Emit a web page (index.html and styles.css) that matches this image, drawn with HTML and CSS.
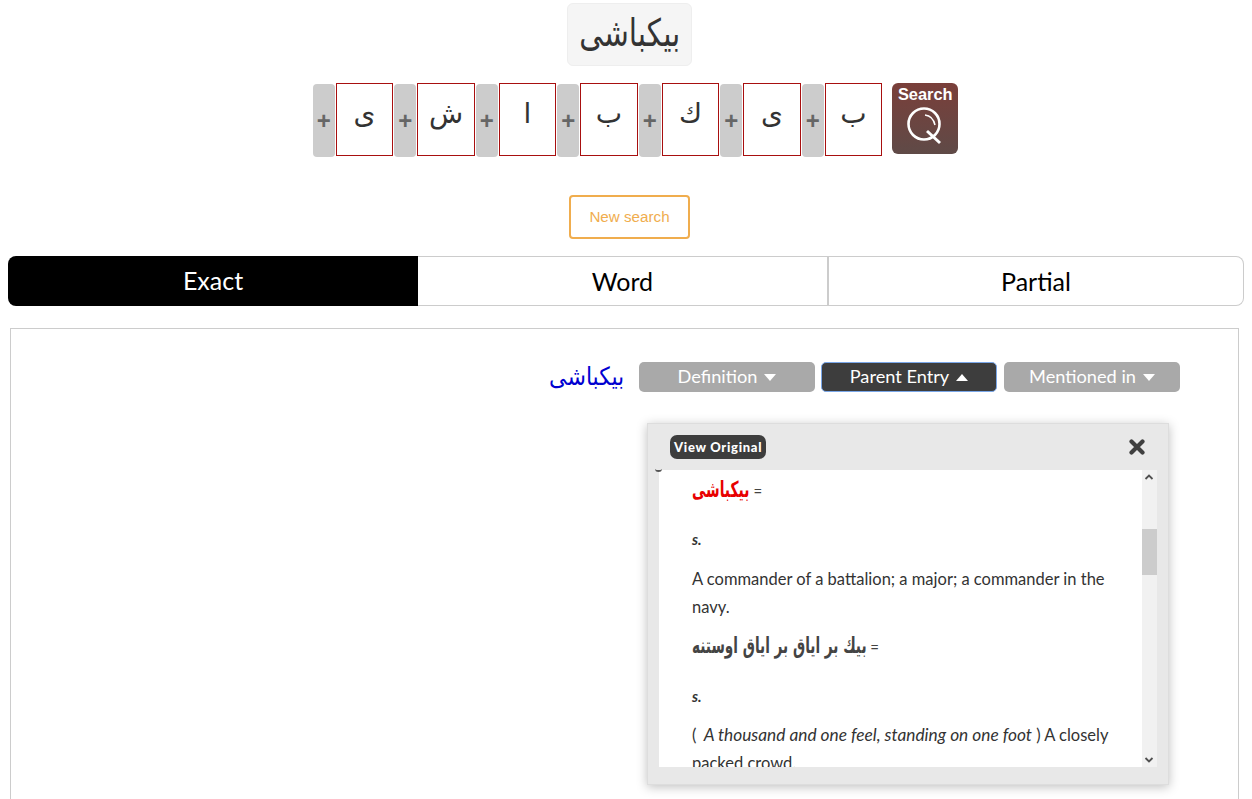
FILE: index.html
```html
<!DOCTYPE html>
<html lang="en">
<head>
<meta charset="utf-8">
<title>Search</title>
<link rel="stylesheet" href="styles.css">
</head>
<body>
<div class="head">
  <div class="word"><span class="word-text">بيكباشى</span></div>
</div>
<div class="letters" dir="rtl">
  <div class="search">
    <span class="search-label">Search</span>
    <svg class="search-icon" viewBox="0 0 40 40" width="40" height="40"><circle cx="19" cy="18" r="15.5" fill="none" stroke="#fff" stroke-width="2.6"/><path d="M22 25 L35 37" stroke="#fff" stroke-width="3" fill="none"/><path d="M20 9 Q28 10 30 19" stroke="#fff" stroke-width="1.5" fill="none"/></svg>
  </div>
  <div class="cell">ب</div><div class="plus">+</div>
  <div class="cell">ى</div><div class="plus">+</div>
  <div class="cell">ك</div><div class="plus">+</div>
  <div class="cell">ب</div><div class="plus">+</div>
  <div class="cell">ا</div><div class="plus">+</div>
  <div class="cell">ش</div><div class="plus">+</div>
  <div class="cell">ى</div><div class="plus">+</div>
</div>
<div class="new-row"><button class="new">New search</button></div>
<div class="tabs">
  <div class="tab tab-active">Exact</div>
  <div class="tab tab-mid">Word</div>
  <div class="tab tab-last">Partial</div>
</div>
<div class="panel">
  <div class="entry">
    <span class="entry-word">بيكباشى</span>
    <button class="pill pill-first">Definition <i class="down"></i></button>
    <button class="pill pill-on">Parent Entry <i class="up"></i></button>
    <button class="pill">Mentioned in <i class="down"></i></button>
  </div>
  <div class="popup">
    <div class="popup-head">
      <span class="view">View Original</span>
      <svg class="close" viewBox="0 0 16 16" width="16" height="16"><path d="M2.5 2.5 L13.5 13.5 M13.5 2.5 L2.5 13.5" stroke="#3f3f3f" stroke-width="4.2" stroke-linecap="round"/></svg>
    </div>
    <div class="curl"></div>
    <div class="content">
      <div class="text">
        <p class="ar"><b class="ar-word ar-red">بيكباشى</b> =</p>
        <p class="pos">s.</p>
        <p class="def def-first">A commander of a battalion; a major; a commander in the navy.</p>
        <p class="ar ar2"><b class="ar-word ar-long">بيك بر اياق بر اياق اوستنه</b> =</p>
        <p class="pos pos2">s.</p>
        <p class="def">( <em>A thousand and one feel, standing on one foot</em> ) A closely packed crowd.</p>
      </div>
      <div class="track">
        <svg class="arrow arrow-up" viewBox="0 0 10 6" width="10" height="6"><path d="M1.5 5 L5 1.5 L8.5 5" fill="none" stroke="#505050" stroke-width="1.8"/></svg>
        <div class="thumb"></div>
        <svg class="arrow arrow-down" viewBox="0 0 10 6" width="10" height="6"><path d="M1.5 1 L5 4.5 L8.5 1" fill="none" stroke="#505050" stroke-width="1.8"/></svg>
      </div>
    </div>
  </div>
</div>
</body>
</html>
```

FILE: styles.css
```css
html, body { margin: 0; padding: 0; }
body {
  height: 799px;
  overflow: hidden;
  background: #fff;
  color: #333;
  font-family: "Lato", "DejaVu Sans", sans-serif;
}
button { font-family: inherit; cursor: pointer; }
.head {
  display: flex;
  justify-content: center;
  padding: 3px 0 0 7px;
}
.word {
  width: 123px;
  height: 61px;
  border: 1px solid #eee;
  border-radius: 6px;
  background: #f5f5f5;
  color: #333;
  display: flex;
  justify-content: center;
  white-space: nowrap;
  overflow: hidden;
}
.word-text {
  display: block;
  flex: none;
  font: 38px/58px "DejaVu Sans", sans-serif;
  transform: scaleX(.78);
}
.letters {
  display: flex;
  justify-content: center;
  align-items: flex-start;
  margin-top: 17px;
  padding-left: 18px;
  height: 74px;
}
.search {
  width: 66px;
  height: 71px;
  margin-left: 10px;
  border-radius: 6px;
  background: linear-gradient(#7a3f3a, #5f4a47);
  color: #fff;
  display: flex;
  flex-direction: column;
  align-items: center;
}
.search-label {
  font: bold 16.4px/22px "Liberation Sans", sans-serif;
  margin-bottom: 1px;
}
.cell {
  box-sizing: border-box;
  width: 57.5px;
  height: 73px;
  border: 1px solid #a80f0f;
  background: #fff;
  margin-left: 1px;
  text-align: center;
  font: 28px/60px "DejaVu Sans", sans-serif;
  color: #333;
}
.plus {
  box-sizing: border-box;
  width: 22px;
  height: 73px;
  margin-top: 1px;
  margin-left: 1px;
  border-radius: 4px;
  background: #ccc;
  color: #666;
  text-align: center;
  font: bold 24px/74px "Liberation Sans", sans-serif;
}
.new-row {
  display: flex;
  justify-content: center;
  padding-left: 7px;
  margin-top: 38px;
}
.new {
  width: 121px;
  height: 44px;
  border: 2px solid #f0ad4e;
  border-radius: 4px;
  background: #fff;
  color: #f0ad4e;
  font: 15.2px "Liberation Sans", sans-serif;
  padding: 0 0 2px;
}
.tabs {
  display: flex;
  margin: 17px 8px 0;
  height: 50px;
  font-size: 25px;
  font-family: "Lato", sans-serif;
}
.tab {
  box-sizing: border-box;
  line-height: 48px;
  text-align: center;
  color: #000;
  border: 1px solid #ccc;
  border-left: 0;
}
.tab-active {
  width: 410px;
  background: #000;
  color: #fff;
  border: 0;
  border-radius: 8px 0 0 8px;
}
.tab-mid { width: 411px; border-right: 2px solid #ccc; }
.tab-last { width: 415px; border-radius: 0 8px 8px 0; }
.panel {
  box-sizing: border-box;
  margin: 22px 13px 0 10px;
  height: 480px;
  border: 1px solid #ccc;
  border-bottom: 0;
  position: relative;
}
.entry {
  display: flex;
  align-items: center;
  justify-content: flex-end;
  gap: 7px;
  margin-top: 33px;
  padding-right: 58px;
  height: 30px;
}
.entry-word {
  color: #0000d0;
  font: 25px/30px "DejaVu Sans", sans-serif;
  margin-right: 3px;
  transform: scaleX(.88);
}
.pill {
  box-sizing: border-box;
  width: 176px;
  height: 30px;
  border: 0;
  border-radius: 5px;
  background: #a9a9a9;
  color: #fff;
  font-size: 18.2px;
  padding: 0 0 2px;
  display: flex;
  align-items: center;
  justify-content: center;
  gap: 7px;
}
.pill-first { margin-right: -1px; }
.pill-on {
  background: #3d3d3d;
  border: 1px solid #7aa7e8;
}
.down, .up {
  width: 0;
  height: 0;
  margin-top: 2px;
  border-left: 6.5px solid transparent;
  border-right: 6.5px solid transparent;
}
.down { border-top: 7px solid #fff; }
.up { border-bottom: 7px solid #fff; }
.popup {
  position: absolute;
  left: 636px;
  top: 94px;
  width: 522px;
  height: 362px;
  box-sizing: border-box;
  background: #e8e8e8;
  border: 1px solid #ddd;
  box-shadow: 0 2px 10px rgba(0, 0, 0, .25);
}
.popup-head {
  height: 46px;
  display: flex;
  align-items: center;
  justify-content: space-between;
  padding: 0 23px 2px 22px;
  box-sizing: border-box;
}
.view {
  background: #3d3d3d;
  color: #fff;
  font-weight: 900;
  font-size: 13px;
  letter-spacing: .7px;
  line-height: 24px;
  padding: 0 4px 0 4px;
  border-radius: 7px;
  margin-top: 1px;
}
.close { margin-top: 2px; }
.curl {
  position: absolute;
  left: 7px;
  top: 43px;
  width: 7px;
  height: 3px;
  border-bottom: 2px solid #555;
  border-radius: 0 0 5px 5px;
}
.content {
  margin-left: 11px;
  width: 498px;
  height: 297px;
  display: flex;
  overflow: hidden;
}
.text {
  box-sizing: border-box;
  width: 483px;
  height: 297px;
  overflow: hidden;
  background: #fff;
  padding-left: 33px;
  padding-right: 30px;
  font-size: 16.5px;
  color: #333;
}
.text p { margin: 0; }
.text em { font-size: 17.3px; margin-left: 3px; }
.ar {
  font-size: 15px;
  line-height: 24px;
  padding-top: 8px;
  color: #444;
}
.ar-word {
  display: inline-block;
  font: bold 22px/24px "DejaVu Sans", sans-serif;
  transform-origin: left center;
}
.ar-red {
  color: #e80000;
  transform: scaleX(.63);
  margin-right: -33.5px;
}
.ar-long {
  transform: scaleX(.62);
  margin-right: -107px;
}
.ar2 { padding-top: 13px; }
.pos {
  font-style: italic;
  font-size: 15px;
  line-height: 20px;
  padding-top: 26px;
  font-weight: 700;
}
.pos2 { padding-top: 27px; }
.def {
  line-height: 28px;
  padding-top: 15px;
}
.def-first { padding-top: 16px; }
.track {
  position: relative;
  width: 15px;
  height: 297px;
  background: #f1f1f1;
}
.thumb {
  position: absolute;
  left: 0;
  top: 59px;
  width: 15px;
  height: 46px;
  background: #ccc;
}
.arrow { position: absolute; left: 2px; }
.arrow-up { top: 4px; }
.arrow-down { bottom: 4px; }
```
